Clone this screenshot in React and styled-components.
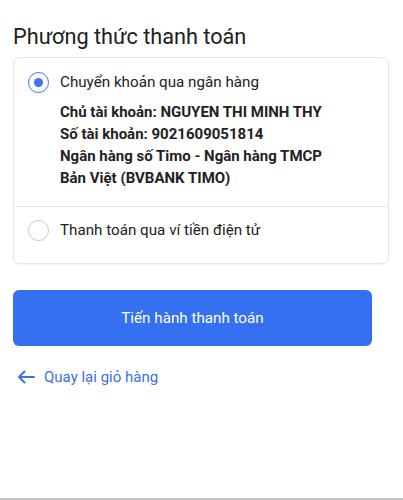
import React, { useState } from 'react';
import styled, { createGlobalStyle } from 'styled-components';

const GlobalStyle = createGlobalStyle`
  html, body {
    margin: 0;
    padding: 0;
    background: #fff;
  }
  body {
    font-family: Roboto, "Noto Sans", Arial, sans-serif;
    color: #1f1f1f;
  }
`;

const Page = styled.div`
  width: 403px;
  height: 500px;
  box-sizing: border-box;
  padding: 22px 14px 0 13px;
  display: flex;
  flex-direction: column;
  align-items: flex-start;
  overflow: hidden;
  border-bottom: 2px solid #c4c4c4;
`;

const Title = styled.h2`
  margin: 0 0 5px;
  font-size: 21.7px;
  font-weight: 400;
  line-height: 30px;
  color: #202020;
`;

const Card = styled.div`
  align-self: stretch;
  border: 1px solid #e6e6e6;
  border-radius: 7px;
  box-shadow: 0 1px 2px rgba(0, 0, 0, 0.05);
  background: #fff;
`;

const Option = styled.div`
  padding: ${(p) => (p.$first ? '13px 14px 17px' : '12px 14px 22px')};
  border-top: ${(p) => (p.$first ? 'none' : '1px solid #e8e8e8')};
  cursor: pointer;
`;

const OptionRow = styled.div`
  display: flex;
  align-items: center;
  gap: 11px;
`;

const Radio = styled.span`
  width: 21px;
  height: 21px;
  box-sizing: border-box;
  border-radius: 50%;
  border: 1.5px solid ${(p) => (p.$checked ? '#3b74ee' : '#c6c6c6')};
  display: flex;
  align-items: center;
  justify-content: center;
  flex-shrink: 0;

  &::after {
    content: '';
    width: 9px;
    height: 9px;
    border-radius: 50%;
    background: ${(p) => (p.$checked ? '#3b74ee' : 'transparent')};
  }
`;

const OptionLabel = styled.span`
  font-size: 15.2px;
  line-height: 22px;
  color: #222;
`;

const Details = styled.div`
  margin: 8px 0 0 32px;
  max-width: 285px;
  font-size: 15px;
  font-weight: 700;
  line-height: 22px;
  color: #222;
`;

const PayButton = styled.button`
  display: block;
  margin-top: 26px;
  width: 359px;
  height: 56px;
  border: none;
  border-radius: 6px;
  background: #3570f1;
  color: #fff;
  font-family: inherit;
  font-size: 15.2px;
  cursor: pointer;
`;

const BackLink = styled.a`
  margin-top: 20px;
  display: flex;
  align-items: center;
  gap: 9px;
  padding-left: 4px;
  line-height: 22px;
  color: #3a70e8;
  font-size: 15px;
  text-decoration: none;
  cursor: pointer;
`;

const options = [
  { id: 'bank', label: 'Chuyển khoản qua ngân hàng' },
  { id: 'wallet', label: 'Thanh toán qua ví tiền điện tử' },
];

export default function App() {
  const [method, setMethod] = useState('bank');

  return (
    <>
      <GlobalStyle />
      <Page>
        <Title>Phương thức thanh toán</Title>
        <Card>
          {options.map((o, i) => (
            <Option key={o.id} $first={i === 0} onClick={() => setMethod(o.id)}>
              <OptionRow>
                <Radio $checked={method === o.id} />
                <OptionLabel>{o.label}</OptionLabel>
              </OptionRow>
              {o.id === 'bank' && method === 'bank' && (
                <Details>
                  <div>Chủ tài khoản: NGUYEN THI MINH THY</div>
                  <div>Số tài khoản: 9021609051814</div>
                  <div>Ngân hàng số Timo - Ngân hàng TMCP Bản Việt (BVBANK TIMO)</div>
                </Details>
              )}
            </Option>
          ))}
        </Card>
        <PayButton>Tiến hành thanh toán</PayButton>
        <BackLink>
          <svg width="18" height="14" viewBox="0 0 18 14" fill="none">
            <path d="M17 7H2M7.5 1.5L2 7l5.5 5.5" stroke="#3a70e8" strokeWidth="2" strokeLinecap="round" strokeLinejoin="round" />
          </svg>
          Quay lại giỏ hàng
        </BackLink>
      </Page>
    </>
  );
}
